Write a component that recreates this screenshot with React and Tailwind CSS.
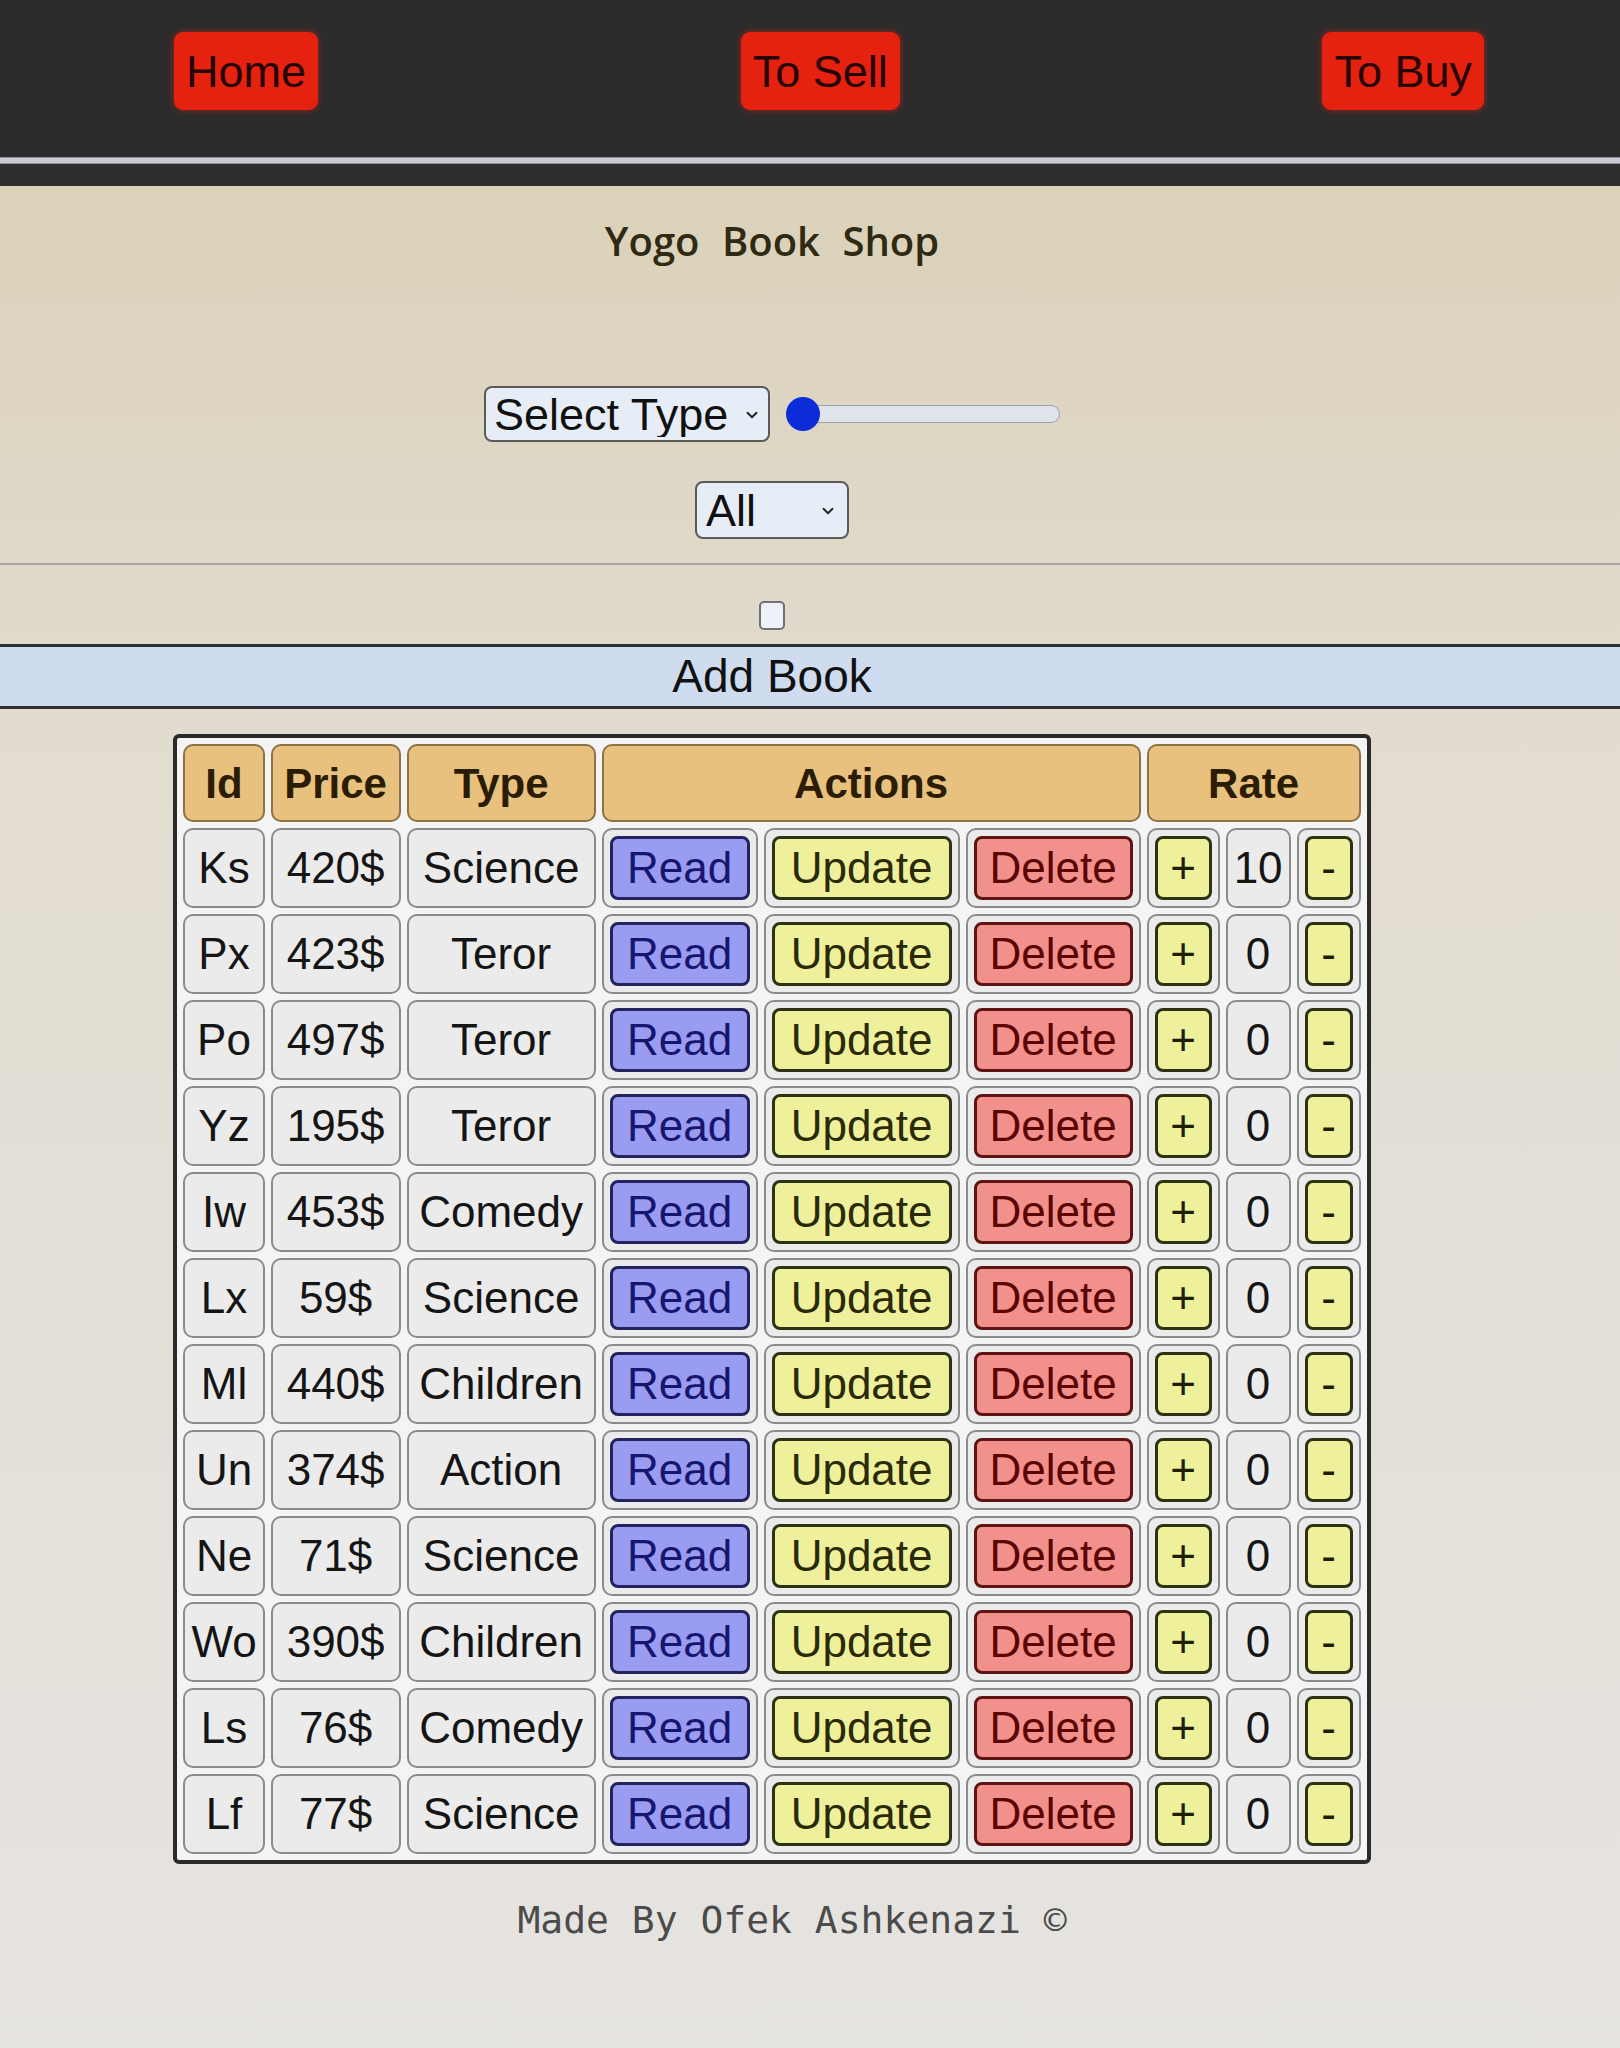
import { ChevronDown } from "lucide-react";

const BOOKS = [
  { id: "Ks", price: 420, type: "Science", rate: 10 },
  { id: "Px", price: 423, type: "Teror", rate: 0 },
  { id: "Po", price: 497, type: "Teror", rate: 0 },
  { id: "Yz", price: 195, type: "Teror", rate: 0 },
  { id: "Iw", price: 453, type: "Comedy", rate: 0 },
  { id: "Lx", price: 59, type: "Science", rate: 0 },
  { id: "Ml", price: 440, type: "Children", rate: 0 },
  { id: "Un", price: 374, type: "Action", rate: 0 },
  { id: "Ne", price: 71, type: "Science", rate: 0 },
  { id: "Wo", price: 390, type: "Children", rate: 0 },
  { id: "Ls", price: 76, type: "Comedy", rate: 0 },
  { id: "Lf", price: 77, type: "Science", rate: 0 },
];

const NavButton = ({ label }) => (
  <button className="h-[78px] px-[12px] rounded-[9px] bg-[#e5220f] text-[45px] leading-none text-[#240404] shadow-[0_0_6px_rgba(229,34,15,0.6)]">
    {label}
  </button>
);

const td = "p-[6px] border-2 border-[#8b8b8b] rounded-[10px] bg-[#ebebeb] text-center leading-none";
const th = "h-[78px] border-2 border-[#8a7346] rounded-[10px] bg-[#e9c17e] text-center font-bold text-[#2b1d05] text-[42px]";
const btn = "w-full h-[64px] rounded-[8px] border-[3px] leading-none text-[44px]";

const BookRow = ({ book }) => (
  <tr>
    <td className={td}>{book.id}</td>
    <td className={td}>{book.price}$</td>
    <td className={td}>{book.type}</td>
    <td className={td}>
      <button className={`${btn} bg-[#9a9cf2] border-[#23235e] text-[#16166e]`}>Read</button>
    </td>
    <td className={td}>
      <button className={`${btn} bg-[#eef09c] border-[#2c3212] text-[#2a2a08]`}>Update</button>
    </td>
    <td className={td}>
      <button className={`${btn} bg-[#f2908c] border-[#5e1414] text-[#5a0404]`}>Delete</button>
    </td>
    <td className={td}>
      <button className={`${btn} bg-[#eef09c] border-[#2c3212] text-[#1e1e06]`}>+</button>
    </td>
    <td className={td}>{book.rate}</td>
    <td className={td}>
      <button className={`${btn} bg-[#eef09c] border-[#2c3212] text-[#1e1e06]`}>-</button>
    </td>
  </tr>
);

export default function App() {
  return (
    <div className="min-h-[2048px] flex flex-col font-['Liberation_Sans',Arial,sans-serif] bg-linear-to-b from-[#d8ceb1] via-[#e2dcd0] via-35% to-[#e6e4e1]">
      {/* Navbar */}
      <header className="bg-[#2c2c2c]">
        <nav className="h-[157px] flex items-start justify-between pt-[32px] pl-[174px] pr-[136px]">
          <NavButton label="Home" />
          <NavButton label="To Sell" />
          <NavButton label="To Buy" />
        </nav>
        <div className="h-[7px] bg-[#c9cdd1] border-y border-[#8d9196]" />
        <div className="h-[22px] bg-[#2e2e2e]" />
      </header>

      {/* Filters */}
      <div className="flex flex-col items-center pr-[76px]">
        <h1 className="mt-[28px] text-[40px] leading-[54px] font-semibold text-[#302a12] font-['Open_Sans',sans-serif] [word-spacing:12px]">
          Yogo Book Shop
        </h1>

        <div className="mt-[118px] flex items-center gap-[18px]">
          <div className="relative">
            <select className="appearance-none w-[286px] h-[56px] pl-[8px] rounded-[8px] border-2 border-[#5a5a5a] bg-[#e7edf6] text-[45px] leading-none text-[#111]">
              <option>Select Type</option>
            </select>
            <ChevronDown className="absolute right-[9px] top-[20px] w-[18px] h-[18px] text-[#222] pointer-events-none" strokeWidth={2.5} />
          </div>
          <div className="relative w-[272px] h-[18px] rounded-full bg-[#dfe3ea] border border-[#9ea3ab]">
            <div className="absolute -left-[3px] top-1/2 -translate-y-1/2 w-[34px] h-[34px] rounded-full bg-[#0b2cd8]" />
          </div>
        </div>

        <div className="relative mt-[39px]">
          <select className="appearance-none w-[154px] h-[58px] pl-[9px] rounded-[8px] border-2 border-[#5a5a5a] bg-[#e7edf6] text-[45px] leading-none text-[#111]">
            <option>All</option>
          </select>
          <ChevronDown className="absolute right-[12px] top-[21px] w-[18px] h-[18px] text-[#222] pointer-events-none" strokeWidth={2.5} />
        </div>
      </div>

      <hr className="mt-[24px] border-t-2 border-[#a7a59f]" />

      <div className="flex justify-center pr-[76px] pt-[36px] pb-[14px]">
        <input type="checkbox" className="appearance-none w-[26px] h-[29px] rounded-[5px] border-2 border-[#6f7278] bg-[#eef2f8]" />
      </div>

      {/* Add Book */}
      <div className="h-[65px] flex items-center justify-center pr-[76px] bg-[#cfdcef] border-y-[3px] border-[#2d2f33] text-[46px] text-[#111]">
        Add Book
      </div>

      {/* Table */}
      <div className="flex justify-center pr-[76px] mt-[25px]">
        <table className="table-fixed border-separate border-spacing-[6px] border-4 border-[#2a2a2a] rounded-[6px] bg-[#f4f4f4] text-[44px] text-[#151515]">
          <colgroup>
            <col className="w-[81px]" />
            <col className="w-[130px]" />
            <col className="w-[189px]" />
            <col className="w-[156px]" />
            <col className="w-[196px]" />
            <col className="w-[175px]" />
            <col className="w-[73px]" />
            <col className="w-[65px]" />
            <col className="w-[64px]" />
          </colgroup>
          <thead>
            <tr>
              <th className={th}>Id</th>
              <th className={th}>Price</th>
              <th className={th}>Type</th>
              <th className={th} colSpan={3}>Actions</th>
              <th className={th} colSpan={3}>Rate</th>
            </tr>
          </thead>
          <tbody>
            {BOOKS.map((book) => (
              <BookRow key={book.id} book={book} />
            ))}
          </tbody>
        </table>
      </div>

      <footer className="mt-[32px] flex justify-center pr-[36px] text-[38px] leading-[48px] text-[#4b4b4b] font-['DejaVu_Sans_Mono',monospace]">
        Made By Ofek Ashkenazi ©
      </footer>
    </div>
  );
}
